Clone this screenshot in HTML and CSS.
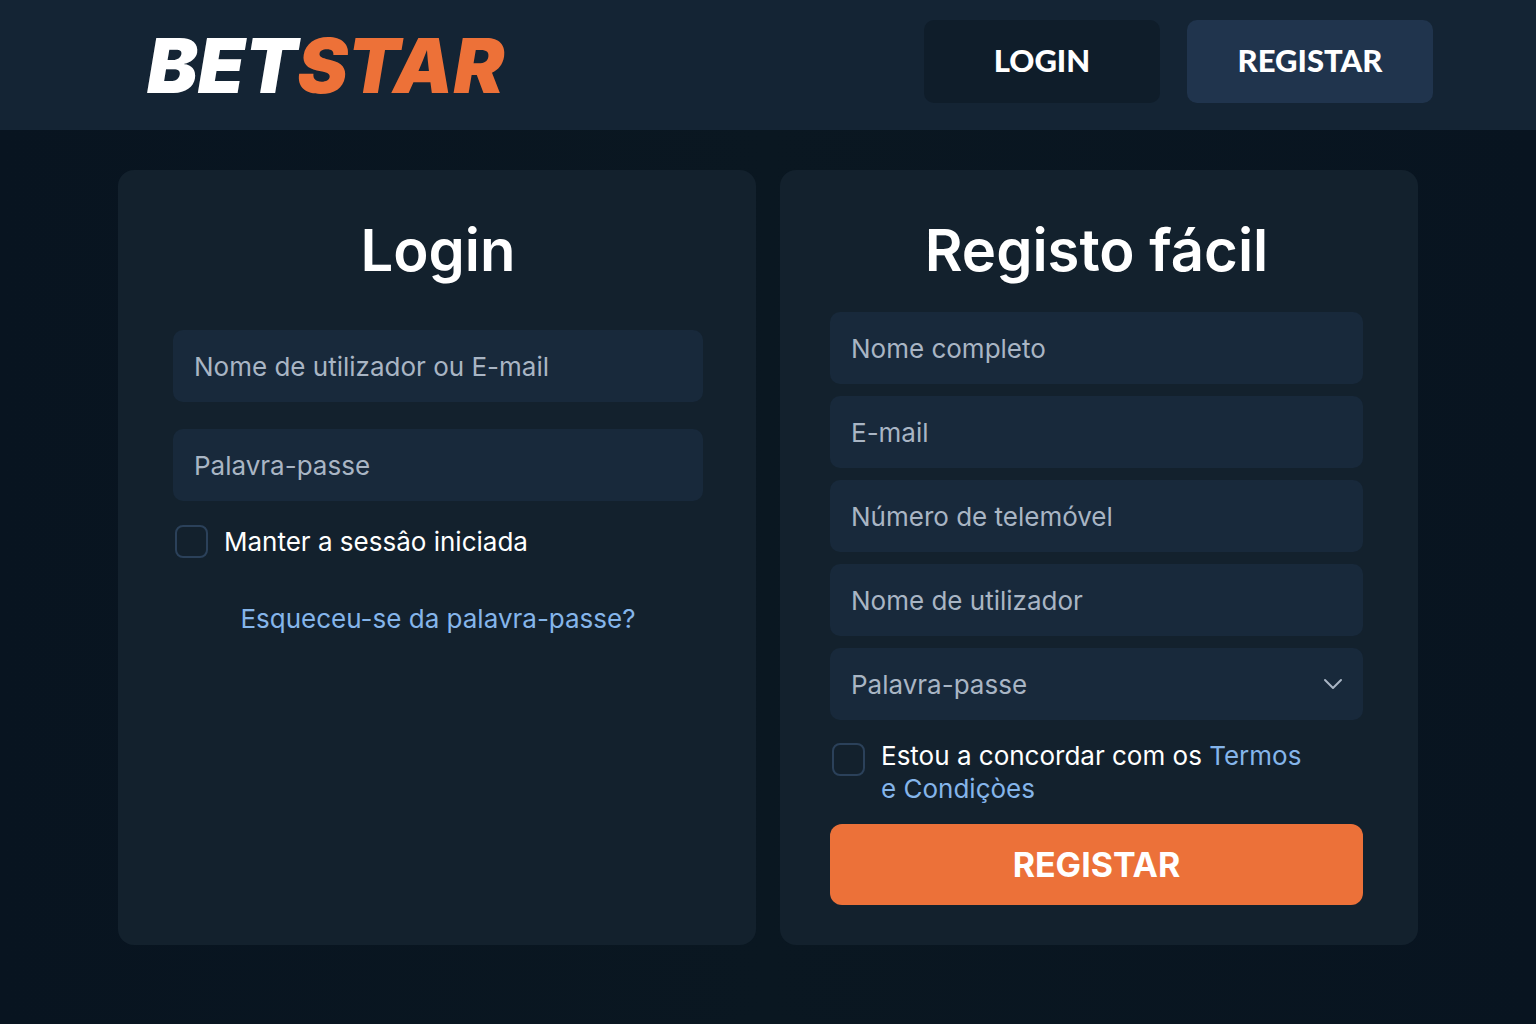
FILE: index.html
```html
<!DOCTYPE html>
<html lang="pt">
<head>
    <meta charset="UTF-8">
    <meta name="viewport" content="width=device-width, initial-scale=1.0">
    <title>BetStar</title>
    <link rel="stylesheet" href="styles.css">
</head>
<body>
    <header class="header">
        <a href="#" class="logo">BET<span>STAR</span></a>
        <nav class="nav">
            <a href="#login" class="nav-btn nav-login">LOGIN</a>
            <a href="#registo" class="nav-btn nav-register">REGISTAR</a>
        </nav>
    </header>

    <main class="container">
        <!-- Login -->
        <section class="card card-login" id="login">
            <h2>Login</h2>
            <form class="form login-form">
                <input class="field" type="text" name="username" placeholder="Nome de utilizador ou E-mail" aria-label="Nome de utilizador ou E-mail">
                <input class="field" type="password" name="password" placeholder="Palavra-passe" aria-label="Palavra-passe">
                <div class="check-row">
                    <input type="checkbox" id="remember" name="remember">
                    <label for="remember">Manter a sessâo iniciada</label>
                </div>
                <a href="#" class="forgot">Esqueceu-se da palavra-passe?</a>
            </form>
        </section>

        <!-- Registo -->
        <section class="card card-register" id="registo">
            <h2>Registo fácil</h2>
            <form class="form register-form">
                <input class="field" type="text" name="name" placeholder="Nome completo" aria-label="Nome completo">
                <input class="field" type="email" name="email" placeholder="E-mail" aria-label="E-mail">
                <input class="field" type="tel" name="phone" placeholder="Número de telemóvel" aria-label="Número de telemóvel">
                <input class="field" type="text" name="user" placeholder="Nome de utilizador" aria-label="Nome de utilizador">
                <div class="select-wrap">
                    <select class="field" name="pass" aria-label="Palavra-passe">
                        <option>Palavra-passe</option>
                    </select>
                    <svg class="chevron" width="20" height="12" viewBox="0 0 20 12" fill="none" stroke="currentColor" stroke-width="2" stroke-linecap="round" stroke-linejoin="round">
                        <path d="M2 2l8 8 8-8"/>
                    </svg>
                </div>
                <div class="check-row terms">
                    <input type="checkbox" id="terms" name="terms">
                    <label for="terms">Estou a concordar com os <a href="#">Termos<br>e Condiçòes</a></label>
                </div>
                <button type="submit" class="submit">REGISTAR</button>
            </form>
        </section>
    </main>
</body>
</html>
```
FILE: styles.css
```css
* {
    box-sizing: border-box;
}

body {
    font-family: Inter, sans-serif;
    font-size: 26px;
    line-height: 33px;
    margin: 0;
    min-height: 100vh;
    color: white;
    background: linear-gradient(90deg, #081420, #0a1721 50%, #081420);
}

a {
    color: #85b5ea;
    text-decoration: none;
}

.header {
    display: flex;
    justify-content: space-between;
    align-items: center;
    padding: 20px 103px 27px 147px;
    background-color: #142434;
}

.logo {
    padding-top: 8px;
    font-size: 76px;
    line-height: 75px;
    font-weight: 900;
    font-style: italic;
    color: white;
}

.logo span {
    color: #ed7138;
}

.nav {
    display: flex;
    gap: 27px;
}

.nav-btn {
    width: 246px;
    padding: 23px 0 25px;
    font-family: Lato, sans-serif;
    font-size: 31px;
    line-height: 35px;
    font-weight: 900;
    text-align: center;
    color: white;
    border-radius: 10px;
}

.nav-login {
    width: 236px;
    background-color: #0f1d2a;
}

.nav-register {
    background-color: #20344d;
}

.container {
    display: grid;
    grid-template-columns: 1fr 1fr;
    gap: 24px;
    max-width: 1300px;
    margin: 40px auto;
}

.card {
    background-color: #13212d;
    border-radius: 16px;
}

.card-login {
    padding: 44px 53px 40px 55px;
}

.card-register {
    padding: 44px 55px 40px 50px;
}

h2 {
    margin: 0;
    font-size: 58px;
    line-height: 72px;
    font-weight: 600;
    text-align: center;
}

.form {
    display: flex;
    flex-direction: column;
}

.login-form {
    gap: 24px;
    margin-top: 44px;
}

.login-form .field:first-child {
    margin-bottom: 3px;
}

.register-form {
    gap: 12px;
    margin-top: 26px;
}

.field {
    width: 100%;
    height: 72px;
    padding: 0 21px;
    font: inherit;
    color: #a9b5c4;
    background-color: #18293b;
    border: none;
    border-radius: 10px;
    appearance: none;
}

.field::placeholder {
    color: #a9b5c4;
    opacity: 1;
}

.select-wrap {
    position: relative;
}

.select-wrap .field {
    display: block;
}

.chevron {
    position: absolute;
    right: 20px;
    top: 30px;
    color: #a9b5c4;
    pointer-events: none;
}

.check-row {
    display: flex;
    gap: 16px;
    padding-left: 2px;
}

.check-row input {
    flex: none;
    width: 33px;
    height: 33px;
    margin: 0;
    border: 2px solid #2b415a;
    border-radius: 8px;
    appearance: none;
}

.check-row input:checked {
    background-color: #ed7138;
}

.terms {
    margin: 7px 0;
}

.terms input {
    margin-top: 4px;
}

.forgot {
    margin-top: 20px;
    text-align: center;
}

.submit {
    padding: 20px;
    font: inherit;
    font-size: 34px;
    line-height: 41px;
    font-weight: bold;
    color: white;
    background-color: #ec7139;
    border: none;
    border-radius: 12px;
    cursor: pointer;
}
```
